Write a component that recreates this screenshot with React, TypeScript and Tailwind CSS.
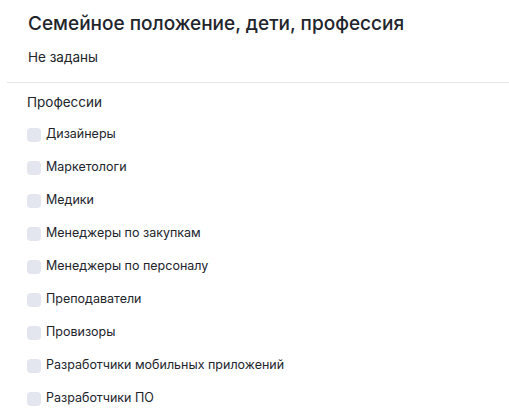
const professions = [
  'Дизайнеры',
  'Маркетологи',
  'Медики',
  'Менеджеры по закупкам',
  'Менеджеры по персоналу',
  'Преподаватели',
  'Провизоры',
  'Разработчики мобильных приложений',
  'Разработчики ПО',
];

function CheckRow({ label }: { label: string }) {
  return (
    <label className="flex items-center gap-[5px] h-[33px]">
      <span className="w-[14px] h-[14px] rounded-[4px] bg-[#e3e5ef] shrink-0" />
      <span className="text-[12.5px] text-[#21242b]">{label}</span>
    </label>
  );
}

export default function App() {
  return (
    <div className="w-[509px] h-[414px] bg-white font-['Inter','Noto_Sans',sans-serif] overflow-hidden">
      <div className="pl-[28px] pt-[10px]">
        <h2 className="text-[19px] leading-[28px] font-medium text-[#21242b]">
          Семейное положение, дети, профессия
        </h2>
        <p className="mt-[9px] text-[13.5px] leading-[20px] text-[#21242b]">Не заданы</p>
      </div>
      <div className="ml-[7px] mt-[15px] border-t border-[#e6e6e6]" />
      <div className="pl-[27px] pt-[9px]">
        <p className="text-[13.5px] leading-[20px] text-[#21242b]">Профессии</p>
        <div className="mt-[6px] flex flex-col">
          {professions.map(p => (
            <CheckRow key={p} label={p} />
          ))}
        </div>
      </div>
    </div>
  );
}
